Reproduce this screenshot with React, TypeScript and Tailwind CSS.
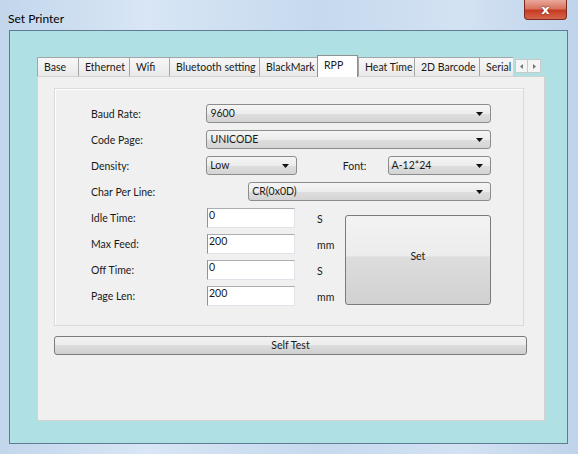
import React from "react";

const tabs = [
  { label: "Base", w: "w-[41px]" },
  { label: "Ethernet", w: "w-[51px]" },
  { label: "Wifi", w: "w-[40px]" },
  { label: "Bluetooth setting", w: "w-[90px]" },
  { label: "BlackMark", w: "w-[58px]" },
  { label: "RPP", w: "w-[41px]", active: true },
  { label: "Heat Time", w: "w-[56px]" },
  { label: "2D Barcode", w: "w-[65px]" },
  { label: "Serial", w: "w-[34px]" },
];

function Combo({ value, className }: { value: string; className: string }) {
  return (
    <div
      className={`flex h-[19px] items-center rounded-[3px] border border-[#8c8c8c] bg-[linear-gradient(to_bottom,#f5f5f5_0%,#ececec_50%,#dedede_52%,#d4d4d4_100%)] pl-[3px] ${className}`}
    >
      <span>{value}</span>
      <svg className="ml-auto mr-[7px]" width="7" height="4" viewBox="0 0 7 4">
        <path d="M0 0h7L3.5 4z" fill="#111" />
      </svg>
    </div>
  );
}

function Field({ label, value, unit }: { label: string; value: string; unit: string }) {
  return (
    <div className="flex h-[26px] items-start">
      <span className="w-[116px] pt-[3px]">{label}</span>
      <div className="h-[20px] w-[88px] border border-[#dfe2e8] border-l-[#8f949c] border-t-[#abadb3] bg-white pl-[1px] leading-[13px]">
        {value}
      </div>
      <span className="ml-[22px] pt-[4px]">{unit}</span>
    </div>
  );
}

export default function App() {
  return (
    <div className="flex h-[454px] w-[578px] flex-col bg-[linear-gradient(to_right,#c2d6ec_0%,#d8e6f5_25%,#c6d9ee_55%,#d3e2f3_80%,#bfd3ea_100%)] font-['Lato',sans-serif] text-[10.5px] text-[#1a1a1a]">
      {/* title bar */}
      <div className="flex h-[30px] shrink-0 items-start justify-between pl-[8px] pr-[11px]">
        <span className="pt-[10px] text-[12px] text-black">Set Printer</span>
        <div className="flex h-[20px] w-[43px] items-center justify-center rounded-b-[4px] border border-t-0 border-[#7a2a1e] bg-[linear-gradient(to_bottom,#e9a99b_0%,#d9735f_45%,#c63b22_55%,#d5654b_100%)]">
          <span className="font-['DejaVu_Sans',sans-serif] text-[13px] font-bold leading-none text-white [text-shadow:0_0_2px_#4a1a10]">
            x
          </span>
        </div>
      </div>

      {/* client area */}
      <div className="mb-[10px] ml-[9px] mr-[10px] flex flex-1 flex-col border border-[#5f7b93] bg-[#afe0e4] pl-[27px] pr-[22px] pt-[24px] pb-[22px]">
        {/* tab strip */}
        <div className="flex h-[21px] items-end">
          {tabs.map((t) =>
            t.active ? (
              <div
                key={t.label}
                className={`${t.w} relative z-10 -mb-px h-[22px] shrink-0 border border-b-0 border-[#8e8f8f] bg-white pl-[6px] pt-[2px]`}
              >
                {t.label}
              </div>
            ) : (
              <div
                key={t.label}
                className={`${t.w} h-[19px] shrink-0 overflow-hidden whitespace-nowrap border-l border-t border-[#a5a5a5] bg-[linear-gradient(to_bottom,#f7f7f7,#e9e9e9)] pl-[6px] pt-[2px]`}
              >
                {t.label}
              </div>
            )
          )}
          <div className="mb-[3px] ml-[2px] flex h-[14px]">
            <div className="flex w-[13px] items-center justify-center border border-[#c9c9c9] bg-[#f4f4f4]">
              <svg width="3" height="5" viewBox="0 0 3 5">
                <path d="M3 0v5L0 2.5z" fill="#777" />
              </svg>
            </div>
            <div className="flex w-[13px] items-center justify-center border border-l-0 border-[#c9c9c9] bg-[#f4f4f4]">
              <svg width="3" height="5" viewBox="0 0 3 5">
                <path d="M0 0v5l3-2.5z" fill="#777" />
              </svg>
            </div>
          </div>
        </div>

        {/* tab page */}
        <div className="flex flex-1 flex-col border border-[#d2d2d2] bg-[#f0f0f0] pl-[16px] pr-[20px] pt-[11px]">
          <div className="flex flex-col border border-[#dadada] pl-[36px] pr-[32px] pt-[15px] pb-[13px] shadow-[inset_1px_1px_0_#ffffff]">
            <div className="flex h-[26px] items-start">
              <span className="w-[116px] pt-[3px]">Baud Rate:</span>
              <Combo value="9600" className="w-[286px]" />
            </div>
            <div className="flex h-[26px] items-start">
              <span className="w-[116px] pt-[3px]">Code Page:</span>
              <Combo value="UNICODE" className="w-[286px]" />
            </div>
            <div className="flex h-[26px] items-start">
              <span className="w-[116px] pt-[3px]">Density:</span>
              <Combo value="Low" className="w-[91px]" />
              <span className="ml-[46px] w-[45px] pt-[3px]">Font:</span>
              <Combo value="A-12*24" className="w-[104px]" />
            </div>
            <div className="flex h-[26px] items-start">
              <span className="w-[158px] pt-[3px]">Char Per Line:</span>
              <Combo value="CR(0x0D)" className="w-[244px]" />
            </div>
            <div className="flex items-start">
              <div className="flex w-[255px] flex-col">
                <Field label="Idle Time:" value="0" unit="S" />
                <Field label="Max Feed:" value="200" unit="mm" />
                <Field label="Off Time:" value="0" unit="S" />
                <Field label="Page Len:" value="200" unit="mm" />
              </div>
              <button className="mt-[7px] flex h-[90px] w-[147px] items-center justify-center rounded-[3px] border border-[#7b7b7b] bg-[linear-gradient(to_bottom,#f3f3f3_0%,#ececec_45%,#dddddd_47%,#d1d1d1_100%)] pb-[6px]">
                Set
              </button>
            </div>
          </div>
          <button className="mt-[10px] flex h-[19px] w-[473px] items-center justify-center rounded-[3px] border border-[#7b7b7b] bg-[linear-gradient(to_bottom,#f3f3f3_0%,#ececec_45%,#dddddd_50%,#cfcfcf_100%)]">
            Self Test
          </button>
        </div>
      </div>
    </div>
  );
}
